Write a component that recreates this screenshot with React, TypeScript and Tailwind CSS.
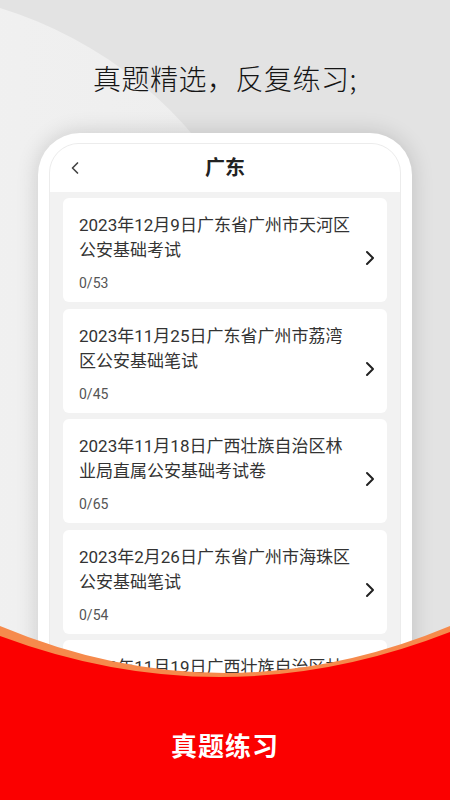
import React from "react";
import { ChevronLeft, ChevronRight } from "lucide-react";

const items = [
  { lines: ["2023年12月9日广东省广州市天河区", "公安基础考试"], count: "0/53" },
  { lines: ["2023年11月25日广东省广州市荔湾", "区公安基础笔试"], count: "0/45" },
  { lines: ["2023年11月18日广西壮族自治区林", "业局直属公安基础考试卷"], count: "0/65" },
  { lines: ["2023年2月26日广东省广州市海珠区", "公安基础笔试"], count: "0/54" },
  { lines: ["2023年11月19日广西壮族自治区林", "业局公安基础考试"], count: "0/60" },
];

export default function App() {
  return (
    <div className="relative w-[450px] h-[800px] overflow-hidden bg-[#e3e3e3] font-['Roboto','Noto_Sans_CJK_SC',sans-serif]">
      <svg className="absolute inset-0" width="450" height="800" viewBox="0 0 450 800">
        <defs>
          <linearGradient id="bgl" x1="0" y1="0" x2="1" y2="0">
            <stop offset="0" stopColor="#f6f6f6" />
            <stop offset="1" stopColor="#ededed" />
          </linearGradient>
        </defs>
        <circle cx="-120" cy="400" r="410" fill="url(#bgl)" />
      </svg>

      <div className="relative flex flex-col items-center">
        <h1 className="mt-[62px] text-[28px] leading-[32px] font-light text-[#151515] tracking-[0.5px] font-['Noto_Sans_CJK_SC',sans-serif]">
          真题精选，反复练习;
        </h1>

        <div className="mt-[39px] w-[374px] h-[760px] rounded-[42px] bg-white px-[11px] pt-[10px] shadow-[0_0_22px_rgba(0,0,0,0.16)]">
          <div className="h-full rounded-[30px] border border-[#ececec] bg-[#f2f2f2] overflow-hidden">
            <div className="h-[48px] bg-white grid grid-cols-[60px_1fr_60px] items-center">
              <div className="pl-[15px] flex items-center">
                <ChevronLeft size={20} strokeWidth={2} className="text-[#444]" />
              </div>
              <div className="text-center text-[20px] font-bold text-[#222] leading-[28px]">广东</div>
              <div />
            </div>

            <div className="px-[13px] pt-[6px] flex flex-col gap-[6.5px]">
              {items.map((it, i) => (
                <div key={i} className="h-[104px] shrink-0 rounded-[6px] bg-white flex">
                  <div className="flex-1 pl-[16px] pt-[15px]">
                    <div className="text-[17px] leading-[25px] text-[#333]">
                      {it.lines.map((l, j) => (
                        <div key={j} className="whitespace-nowrap">{l}</div>
                      ))}
                    </div>
                    <div className="mt-[10px] text-[14px] leading-[20px] text-[#555]">{it.count}</div>
                  </div>
                  <div className="pr-[5px] pt-[48px]">
                    <ChevronRight size={24} strokeWidth={2} className="text-[#222]" />
                  </div>
                </div>
              ))}
            </div>
          </div>
        </div>
      </div>

      <div className="absolute left-0 bottom-0 w-[450px] h-[174px]">
        <svg className="absolute inset-0" width="450" height="174" viewBox="0 0 450 174">
          <path d="M0 0 Q225 94 450 0 L450 174 L0 174 Z" fill="#f68a4c" />
          <path d="M0 10 Q225 94 450 6 L450 174 L0 174 Z" fill="#fb0000" />
        </svg>
        <div className="relative pt-[104px] text-center text-[26px] leading-[30px] font-bold text-white tracking-[1px] font-['Noto_Sans_CJK_SC',sans-serif]">
          真题练习
        </div>
      </div>
    </div>
  );
}
